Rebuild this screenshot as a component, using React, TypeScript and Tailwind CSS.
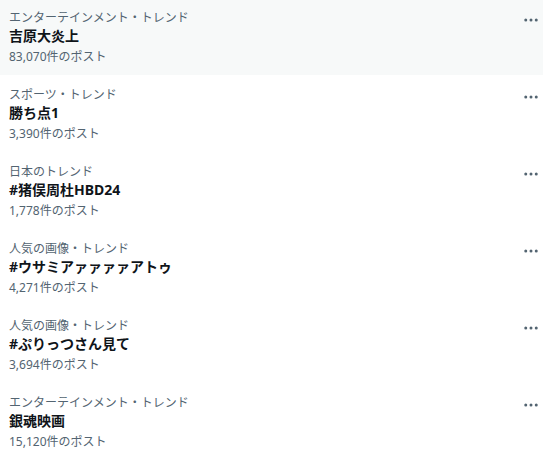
const trends = [
  { category: "エンターテインメント・トレンド", title: "吉原大炎上", posts: "83,070件のポスト", active: true },
  { category: "スポーツ・トレンド", title: "勝ち点1", posts: "3,390件のポスト" },
  { category: "日本のトレンド", title: "#猪俣周杜HBD24", posts: "1,778件のポスト" },
  { category: "人気の画像・トレンド", title: "#ウサミアァァァァアトゥ", posts: "4,271件のポスト" },
  { category: "人気の画像・トレンド", title: "#ぷりっつさん見て", posts: "3,694件のポスト" },
  { category: "エンターテインメント・トレンド", title: "銀魂映画", posts: "15,120件のポスト" },
];

function MoreIcon() {
  return (
    <svg viewBox="0 0 24 24" className="w-[18px] h-[18px] fill-[#536471]">
      <circle cx="5" cy="12" r="2" />
      <circle cx="12" cy="12" r="2" />
      <circle cx="19" cy="12" r="2" />
    </svg>
  );
}

export default function App() {
  return (
    <div
      className="w-[543px] h-[458px] overflow-hidden bg-white"
      style={{ fontFamily: '"Noto Sans", "Noto Sans CJK JP", sans-serif' }}
    >
      <div className="-mt-[2px] flex flex-col">
        {trends.map((t, i) => (
          <div
            key={i}
            className={`h-[77px] flex justify-between pl-[9px] pr-[3px] ${t.active ? "bg-[#f7f9f9]" : ""}`}
          >
            <div className="flex flex-col pt-[12px]">
              <div className="text-[12px] leading-[16px] text-[#536471]">{t.category}</div>
              <div className="text-[14px] leading-[20px] font-bold text-[#0f1419]">{t.title}</div>
              <div className="mt-[3px] text-[12px] leading-[16px] text-[#536471]">{t.posts}</div>
            </div>
            <div className="pt-[13px]">
              <MoreIcon />
            </div>
          </div>
        ))}
      </div>
    </div>
  );
}
